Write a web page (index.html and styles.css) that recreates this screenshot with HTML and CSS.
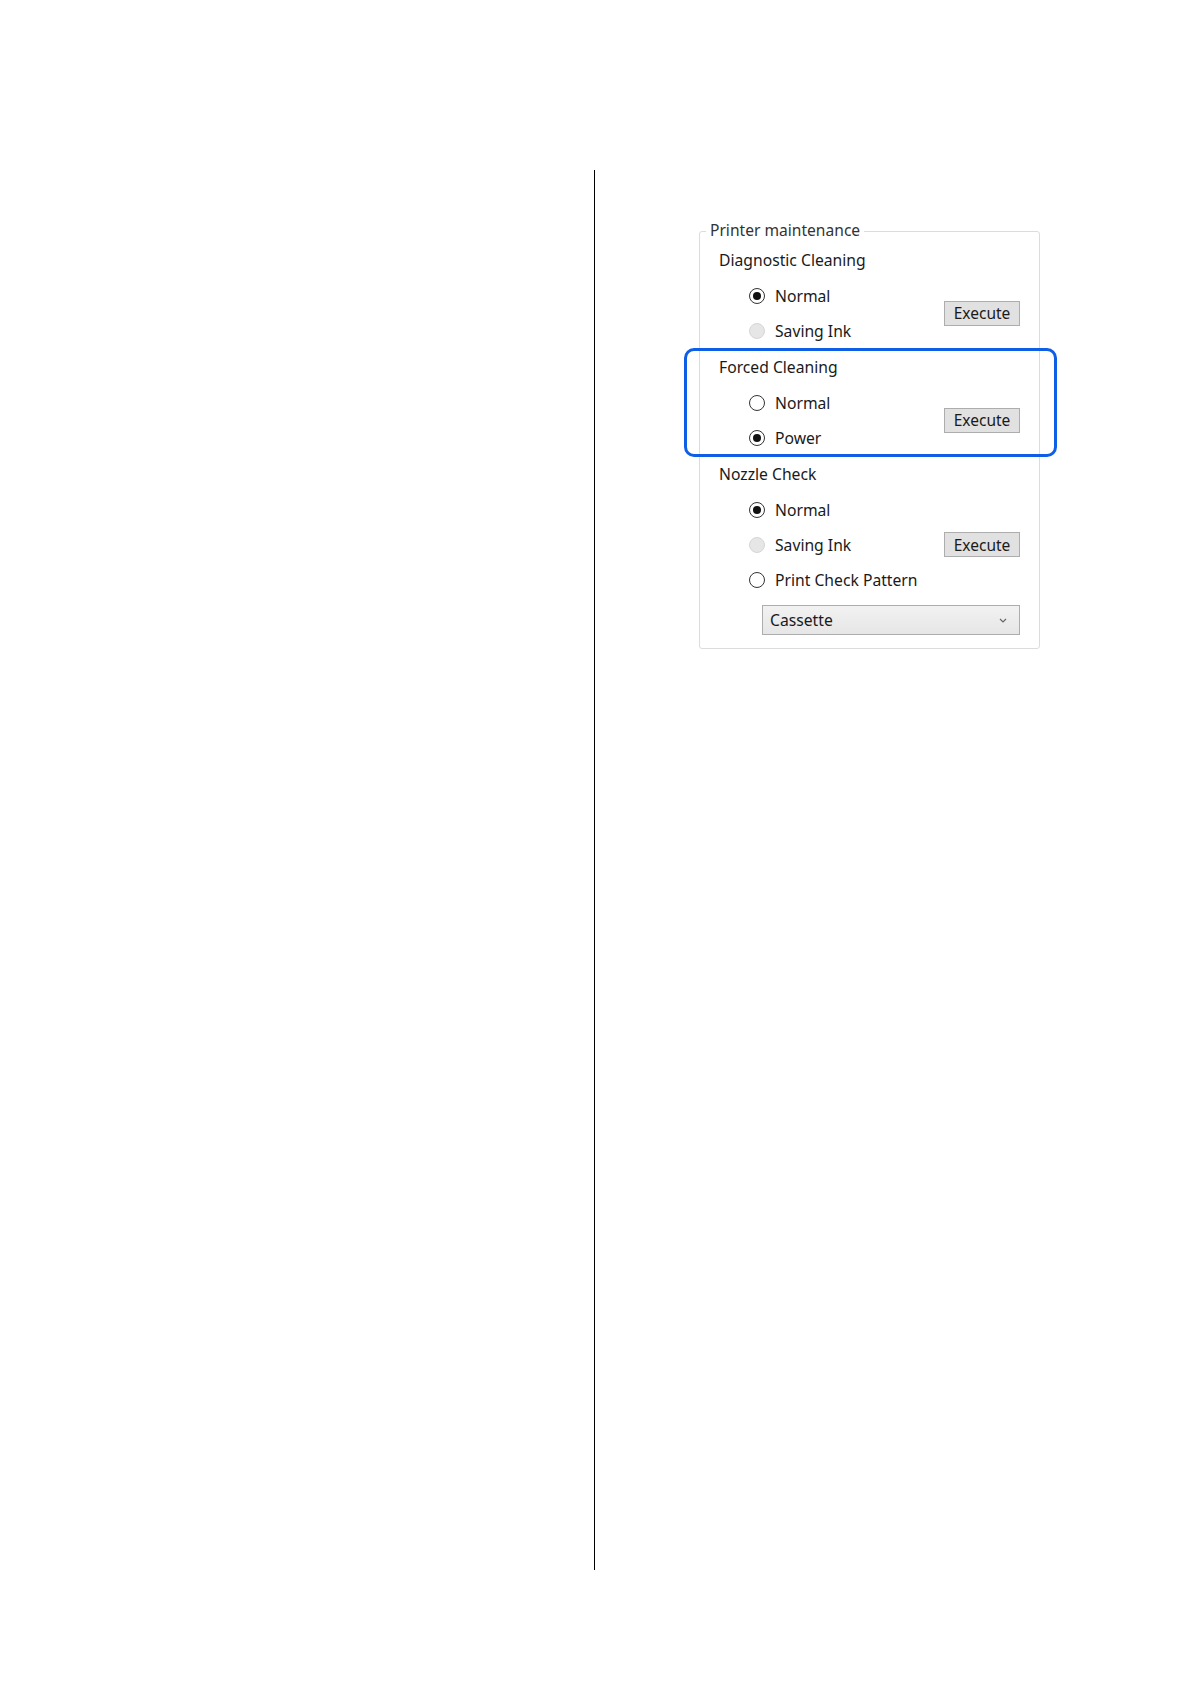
FILE: index.html
```html
<!DOCTYPE html>
<html lang="en">
<head>
    <meta charset="UTF-8">
    <title>Printer maintenance</title>
    <link rel="stylesheet" href="styles.css">
</head>
<body>
    <div class="page">
        <div class="left-col"></div>
        <div class="right-col">
            <fieldset class="group">
                <legend>Printer maintenance</legend>

                <div class="section">
                    <div class="section-title">Diagnostic Cleaning</div>
                    <div class="section-body">
                        <div class="options">
                            <label class="option"><span class="radio checked"></span>Normal</label>
                            <label class="option"><span class="radio disabled"></span>Saving Ink</label>
                        </div>
                        <button class="btn">Execute</button>
                    </div>
                </div>

                <div class="section highlight">
                    <div class="section-title">Forced Cleaning</div>
                    <div class="section-body">
                        <div class="options">
                            <label class="option"><span class="radio"></span>Normal</label>
                            <label class="option"><span class="radio checked"></span>Power</label>
                        </div>
                        <button class="btn">Execute</button>
                    </div>
                </div>

                <div class="section">
                    <div class="section-title">Nozzle Check</div>
                    <div class="section-body">
                        <div class="options">
                            <label class="option"><span class="radio checked"></span>Normal</label>
                            <label class="option"><span class="radio disabled"></span>Saving Ink</label>
                            <label class="option"><span class="radio"></span>Print Check Pattern</label>
                        </div>
                        <button class="btn">Execute</button>
                    </div>
                    <div class="select">
                        <span>Cassette</span>
                        <svg width="8" height="5" viewBox="0 0 8 5"><path d="M1 1 L4 4 L7 1" fill="none" stroke="#666" stroke-width="1.2"/></svg>
                    </div>
                </div>
            </fieldset>
        </div>
    </div>
</body>
</html>
```

FILE: styles.css
```css
body {
    margin: 0;
    background: #fff;
    font-family: "Noto Sans", "Open Sans", sans-serif;
    color: #1a1a1a;
}
.page {
    display: grid;
    grid-template-columns: 594px 1fr;
    padding-top: 170px;
}
.right-col {
    border-left: 1px solid #000;
    height: 1400px;
    box-sizing: border-box;
    padding-left: 104px;
    padding-top: 50px;
}
.group {
    width: 339px;
    margin: 0;
    padding: 0 0 11px 0;
    border: 1px solid #dcdcdc;
    border-radius: 3px;
}
.group legend {
    margin-left: 6px;
    padding: 0 4px 3px 4px;
    font-size: 15.6px;
    line-height: 20px;
    color: #333;
}
.section {
    position: relative;
    margin-bottom: 2px;
}
.section-title {
    padding-left: 19px;
    height: 35px;
    line-height: 35px;
    font-size: 15.7px;
}
.section-body {
    display: flex;
    align-items: center;
    justify-content: space-between;
    padding-right: 19px;
}
.options {
    padding-left: 49px;
}
.option {
    display: flex;
    align-items: center;
    height: 35px;
    font-size: 15.7px;
}
.radio {
    width: 14px;
    height: 14px;
    border: 1px solid #333;
    border-radius: 50%;
    margin-right: 10px;
    background: #fff;
    display: flex;
    align-items: center;
    justify-content: center;
}
.radio.checked::after {
    content: "";
    width: 8px;
    height: 8px;
    border-radius: 50%;
    background: #111;
}
.radio.disabled {
    border-color: #d6d6d6;
    background: #e6e6e6;
}
.btn {
    width: 76px;
    height: 25px;
    padding: 0;
    border: 1px solid #adadad;
    background: #e1e1e1;
    font-family: inherit;
    font-size: 15.5px;
    color: #1a1a1a;
}
.highlight::after {
    content: "";
    position: absolute;
    top: -2px;
    bottom: -2px;
    left: -16px;
    right: -18px;
    border: 3px solid #0f5fe6;
    border-radius: 10px;
}
.select {
    display: flex;
    align-items: center;
    justify-content: space-between;
    margin: 8px 19px 0 62px;
    height: 28px;
    padding: 0 12px 0 7px;
    border: 1px solid #adadad;
    background: linear-gradient(#f2f2f2, #e6e6e6);
    font-size: 15.7px;
}
```
